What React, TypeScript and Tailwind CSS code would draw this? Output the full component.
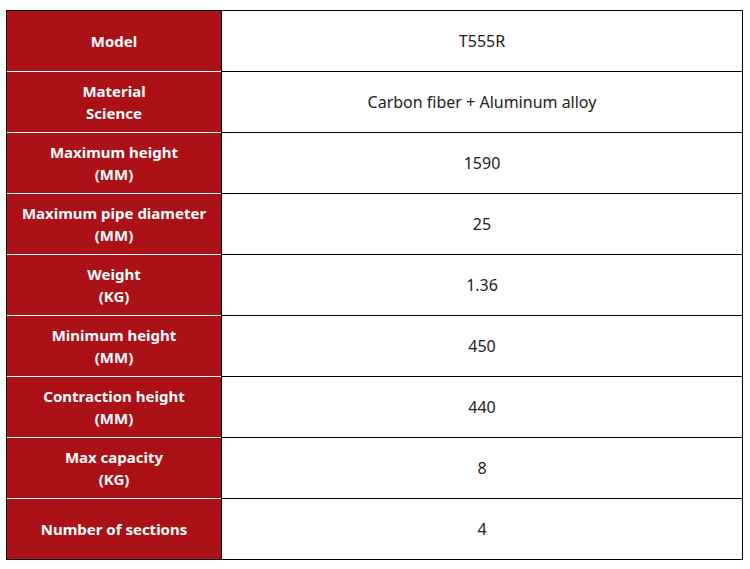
import React from "react";

type Spec = { label: string[]; value: string };

const specs: Spec[] = [
	{ label: ["Model"], value: "T555R" },
	{ label: ["Material", "Science"], value: "Carbon fiber + Aluminum alloy" },
	{ label: ["Maximum height", "(MM)"], value: "1590" },
	{ label: ["Maximum pipe diameter", "(MM)"], value: "25" },
	{ label: ["Weight", "(KG)"], value: "1.36" },
	{ label: ["Minimum height", "(MM)"], value: "450" },
	{ label: ["Contraction height", "(MM)"], value: "440" },
	{ label: ["Max capacity", "(KG)"], value: "8" },
	{ label: ["Number of sections"], value: "4" },
];

export default function App() {
	return (
		<div className="h-[569px] w-[750px] bg-white pl-[6px] pt-[10px] font-['Noto_Sans',sans-serif]">
			<div className="flex w-[737px] flex-col border border-black">
				{specs.map((row, i) => (
					<div key={row.label.join(" ")} className="flex h-[61px] first:h-[60px]">
						<div
							className={`flex w-[214px] flex-col items-center justify-center bg-[#ab1116] text-[15px] font-bold leading-[22px] text-white ${i > 0 ? "border-t border-white" : ""}`}
						>
							{row.label.map((line) => (
								<span key={line}>{line}</span>
							))}
						</div>
						<div
							className={`flex flex-1 items-center justify-center border-l border-black text-[16px] text-[#222] ${i > 0 ? "border-t border-t-black" : ""}`}
						>
							{row.value}
						</div>
					</div>
				))}
			</div>
		</div>
	);
}
